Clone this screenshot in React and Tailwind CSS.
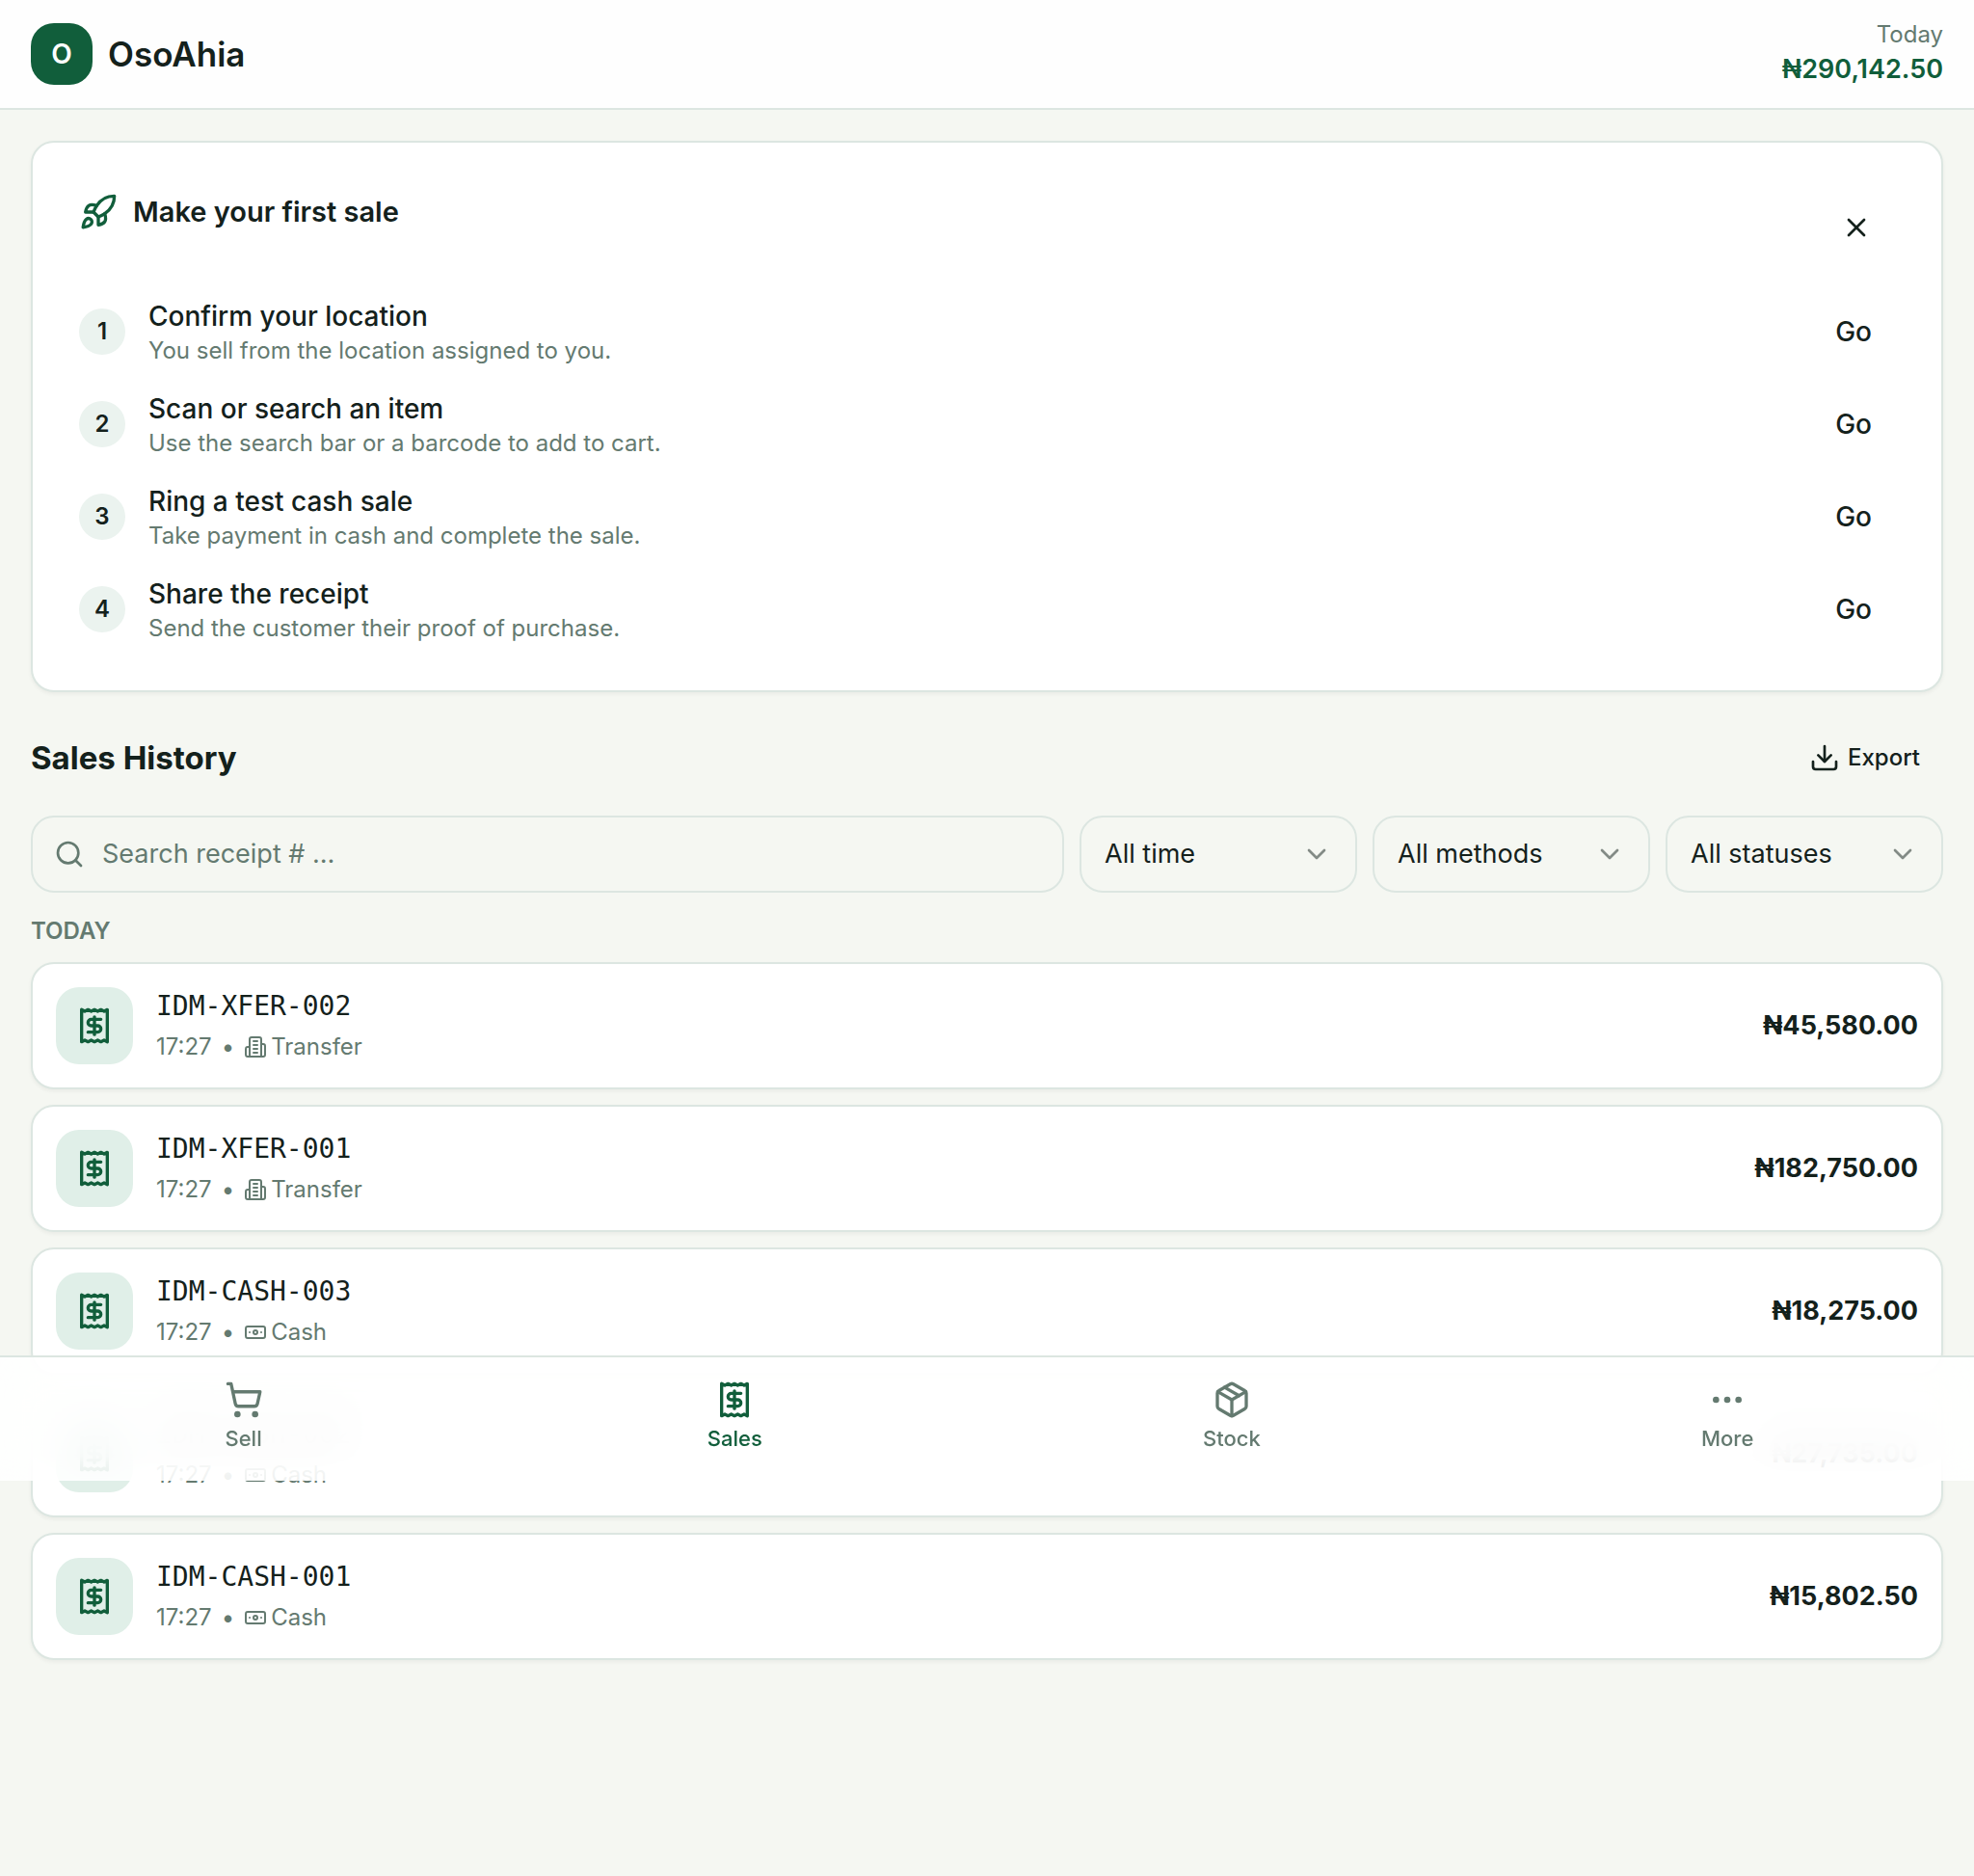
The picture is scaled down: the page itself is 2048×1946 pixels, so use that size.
import {
  Banknote,
  ChevronDown,
  Download,
  Ellipsis,
  Package,
  Rocket,
  Search,
  ShoppingCart,
  X,
} from "lucide-react";

const STEPS = [
  { title: "Confirm your location", hint: "You sell from the location assigned to you." },
  { title: "Scan or search an item", hint: "Use the search bar or a barcode to add to cart." },
  { title: "Ring a test cash sale", hint: "Take payment in cash and complete the sale." },
  { title: "Share the receipt", hint: "Send the customer their proof of purchase." },
];

const SALES = [
  { id: "IDM-XFER-002", time: "17:27", method: "Transfer", amount: "₦45,580.00" },
  { id: "IDM-XFER-001", time: "17:27", method: "Transfer", amount: "₦182,750.00" },
  { id: "IDM-CASH-003", time: "17:27", method: "Cash", amount: "₦18,275.00" },
  { id: "IDM-CASH-002", time: "17:27", method: "Cash", amount: "₦27,735.00" },
  { id: "IDM-CASH-001", time: "17:27", method: "Cash", amount: "₦15,802.50" },
];

const FILTERS = [
  { label: "Period", value: "All time" },
  { label: "Payment method", value: "All methods" },
  { label: "Status", value: "All statuses" },
];

function Icon({ className, children }) {
  return (
    <svg
      viewBox="0 0 24 24"
      fill="none"
      stroke="currentColor"
      strokeWidth="2"
      strokeLinecap="round"
      strokeLinejoin="round"
      className={className}
      aria-hidden="true"
    >
      {children}
    </svg>
  );
}

/* Torn-edge receipt with a dollar sign */
function ReceiptIcon({ className }) {
  return (
    <Icon className={className}>
      <path d="M4 2v20l2-1 2 1 2-1 2 1 2-1 2 1 2-1 2 1V2l-2 1-2-1-2 1-2-1-2 1-2-1-2 1Z" />
      <path d="M16 8h-6a2 2 0 1 0 0 4h4a2 2 0 1 1 0 4H8" />
      <path d="M12 17.5v-11" />
    </Icon>
  );
}

/* Tower with a lower wing on each side */
function BuildingIcon({ className }) {
  return (
    <Icon className={className}>
      <path d="M6 22V4a2 2 0 0 1 2-2h8a2 2 0 0 1 2 2v18Z" />
      <path d="M6 12H4a2 2 0 0 0-2 2v6a2 2 0 0 0 2 2h2" />
      <path d="M18 9h2a2 2 0 0 1 2 2v9a2 2 0 0 1-2 2h-2" />
      <path d="M10 6h4" />
      <path d="M10 10h4" />
      <path d="M10 14h4" />
      <path d="M10 18h4" />
    </Icon>
  );
}

function Header() {
  return (
    <header className="border-b-2 border-[#dce6e1] bg-[#fefefe]">
      <div className="flex h-28 items-center justify-between px-8">
        <div className="flex items-center gap-4">
          <div className="flex size-16 items-center justify-center rounded-3xl bg-[#115e3b] text-[28px] font-semibold text-white">
            O
          </div>
          <span className="text-[35px] leading-12 font-semibold">OsoAhia</span>
        </div>
        <div className="text-right">
          <p className="text-[24px] leading-8 text-[#647a70]">Today</p>
          <p className="text-[27px] leading-10 font-semibold text-[#115e3b]">₦290,142.50</p>
        </div>
      </div>
    </header>
  );
}

function FirstSaleCard() {
  return (
    <section className="rounded-3xl border-2 border-[#dce6e1] bg-white p-12 shadow-[0_2px_4px_rgba(0,0,0,0.05)]">
      <div className="flex items-start justify-between">
        <div className="flex h-12 items-center gap-4">
          <Rocket className="size-10 text-[#115e3b]" />
          <h2 className="text-[29px] font-semibold">Make your first sale</h2>
        </div>
        <button aria-label="Dismiss" className="flex size-20 items-center justify-center">
          <X className="size-8" />
        </button>
      </div>

      <ol className="mt-8 flex flex-col gap-6">
        {STEPS.map((step, i) => (
          <li key={step.title} className="flex items-center gap-6">
            <span className="flex size-12 items-center justify-center rounded-full bg-[#ebf3ef] text-[24px] font-semibold">
              {i + 1}
            </span>
            <div className="flex-1">
              <p className="text-[28px] leading-10 font-medium">{step.title}</p>
              <p className="text-[24px] leading-8 text-[#647a70]">{step.hint}</p>
            </div>
            <button className="h-18 px-6 text-[28px] font-medium">Go</button>
          </li>
        ))}
      </ol>
    </section>
  );
}

function Filters() {
  return (
    <div className="mt-6 flex gap-4">
      <label className="flex h-20 flex-1 items-center gap-[18px] rounded-3xl border-2 border-[#dce6e1] pr-6 pl-[22px]">
        <Search className="size-8 text-[#647a70]" />
        <input
          type="search"
          aria-label="Search receipts"
          placeholder="Search receipt # …"
          className="flex-1 bg-transparent text-[27px] outline-none placeholder:text-[#647a70]"
        />
      </label>
      {FILTERS.map((filter) => (
        <div key={filter.label} className="relative h-20 w-72">
          <select
            aria-label={filter.label}
            className="size-full appearance-none rounded-3xl border-2 border-[#dce6e1] bg-transparent px-6 text-[27px]"
          >
            <option>{filter.value}</option>
          </select>
          <ChevronDown className="pointer-events-none absolute top-6 right-[26px] size-8 opacity-50" />
        </div>
      ))}
    </div>
  );
}

function SaleRow({ sale }) {
  const MethodIcon = sale.method === "Cash" ? Banknote : BuildingIcon;

  return (
    <li className="flex items-center gap-6 rounded-3xl border-2 border-[#dce6e1] bg-white p-6 shadow-[0_2px_4px_rgba(0,0,0,0.05)]">
      <div className="flex size-20 items-center justify-center rounded-3xl bg-[#e0efe8] text-[#115e3b]">
        <ReceiptIcon className="size-10" />
      </div>
      <div className="flex-1">
        <p className="font-['DejaVu_Sans_Mono',monospace] text-[28px] leading-9">{sale.id}</p>
        <p className="mt-2 flex items-center gap-2.5 text-[24px] leading-8 text-[#647a70]">
          <span>{sale.time}</span>
          <span>•</span>
          <span className="flex items-center gap-1">
            <MethodIcon className="size-6" />
            {sale.method}
          </span>
        </p>
      </div>
      <p className="text-[27px] font-bold">{sale.amount}</p>
    </li>
  );
}

function NavItem({ icon: ItemIcon, label, active }) {
  return (
    <a
      href="#"
      className={`flex min-w-24 flex-col items-center gap-1 px-6 text-[22px] leading-8 font-medium ${
        active ? "text-[#115e3b]" : "text-[#647a70]"
      }`}
    >
      <ItemIcon className="size-10" />
      {label}
    </a>
  );
}

function BottomNav() {
  return (
    <nav className="absolute inset-x-0 top-[1406px] h-[130px] border-t-2 border-[#dce6e1]">
      {/* The blur fades out towards the lower edge of the bar */}
      <div className="absolute inset-0 mask-b-from-80% mask-b-to-100% backdrop-blur-xl" />
      <div className="absolute inset-0 bg-white/90" />
      <div className="relative flex justify-around pt-6">
        <NavItem icon={ShoppingCart} label="Sell" />
        <NavItem icon={ReceiptIcon} label="Sales" active />
        <NavItem icon={Package} label="Stock" />
        <NavItem icon={Ellipsis} label="More" />
      </div>
    </nav>
  );
}

export default function App() {
  return (
    <div className="relative min-h-screen bg-[#f5f7f2] font-['Inter',sans-serif] text-[#14211c]">
      <Header />

      <main className="px-8 pt-8 pb-56">
        <FirstSaleCard />

        <div className="mt-8 flex h-18 items-center justify-between">
          <h1 className="text-[33px] leading-12 font-bold">Sales History</h1>
          <button className="flex h-full items-center gap-2 px-6 text-[24px] font-medium">
            <Download className="size-8" />
            Export
          </button>
        </div>

        <Filters />

        <h2 className="mt-6 text-[24px] leading-8 font-semibold text-[#647a70] uppercase">Today</h2>
        <ul className="mt-4 flex flex-col gap-4">
          {SALES.map((sale) => (
            <SaleRow key={sale.id} sale={sale} />
          ))}
        </ul>
      </main>

      <BottomNav />
    </div>
  );
}
